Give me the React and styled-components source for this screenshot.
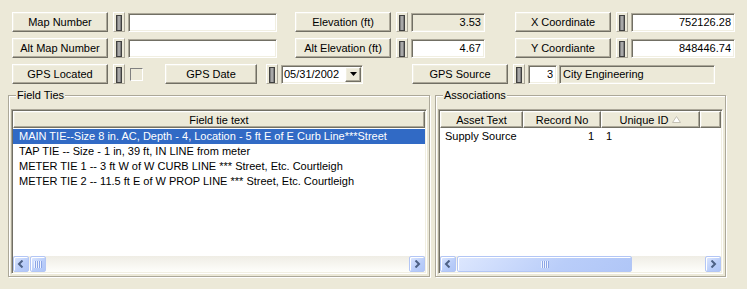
import React from 'react'
import styled, { createGlobalStyle } from 'styled-components'

const GlobalStyle = createGlobalStyle`
  * { box-sizing: border-box; }
  body {
    margin: 0;
    background: #ece9d8;
    font-family: "Liberation Sans", Arial, sans-serif;
    font-size: 11px;
    color: #000;
  }
`

const fieldTies = [
  'MAIN TIE--Size 8 in. AC, Depth - 4, Location - 5 ft E of E Curb Line***Street',
  'TAP TIE -- Size - 1 in, 39 ft, IN LINE from meter',
  'METER TIE 1 -- 3 ft W of W CURB LINE *** Street, Etc. Courtleigh',
  'METER TIE 2 -- 11.5 ft E of W PROP LINE *** Street, Etc. Courtleigh',
]

function LeftArrow() {
  return (
    <svg width="8" height="8" viewBox="0 0 8 8">
      <polyline points="5.5,0.5 2,4 5.5,7.5" fill="none" stroke="#4d6185" strokeWidth="2" />
    </svg>
  )
}

function RightArrow() {
  return (
    <svg width="8" height="8" viewBox="0 0 8 8">
      <polyline points="2.5,0.5 6,4 2.5,7.5" fill="none" stroke="#4d6185" strokeWidth="2" />
    </svg>
  )
}

function Grip() {
  return (
    <svg width="8" height="7" viewBox="0 0 8 7">
      {[0, 2, 4, 6].map((x) => (
        <rect key={x} x={x} y="0" width="1" height="7" fill="#eef3fe" />
      ))}
      {[1, 3, 5, 7].map((x) => (
        <rect key={x} x={x} y="0" width="1" height="7" fill="#8ca6e6" />
      ))}
    </svg>
  )
}

function SortUp() {
  return (
    <svg width="9" height="7" viewBox="0 0 9 7">
      <polygon points="4.5,0.5 8.5,6.5 0.5,6.5" fill="#fff" stroke="#c4c1b4" />
    </svg>
  )
}

function ScrollBar({ thumb }) {
  return (
    <HScroll>
      <ScrollBtn>
        <LeftArrow />
      </ScrollBtn>
      <Thumb $w={thumb}>
        <Grip />
      </Thumb>
      <Track />
      <ScrollBtn>
        <RightArrow />
      </ScrollBtn>
    </HScroll>
  )
}

export default function App() {
  return (
    <Page>
      <GlobalStyle />
      <Form>
        <Row>
          <Field>
            <LabelButton>Map Number</LabelButton>
            <Handle />
            <TextBox $w={149} readOnly defaultValue="" />
          </Field>
          <Field $gap={18}>
            <LabelButton>Elevation (ft)</LabelButton>
            <Handle />
            <TextBox $w={74} $align="right" $disabled readOnly defaultValue="3.53" />
          </Field>
          <Field $gap={30}>
            <LabelButton>X Coordinate</LabelButton>
            <Handle />
            <TextBox $w={104} $align="right" readOnly defaultValue="752126.28" />
          </Field>
        </Row>
        <Row>
          <Field>
            <LabelButton>Alt Map Number</LabelButton>
            <Handle />
            <TextBox $w={149} readOnly defaultValue="" />
          </Field>
          <Field $gap={18}>
            <LabelButton>Alt Elevation (ft)</LabelButton>
            <Handle />
            <TextBox $w={74} $align="right" readOnly defaultValue="4.67" />
          </Field>
          <Field $gap={30}>
            <LabelButton>Y Coordiante</LabelButton>
            <Handle />
            <TextBox $w={104} $align="right" readOnly defaultValue="848446.74" />
          </Field>
        </Row>
        <Row>
          <Field>
            <LabelButton>GPS Located</LabelButton>
            <Handle />
            <CheckBox />
          </Field>
          <Field $gap={22}>
            <LabelButton $w={92}>GPS Date</LabelButton>
            <Handle $left={9} />
            <Combo>
              <ComboText>05/31/2002</ComboText>
              <DropBtn>
                <svg width="7" height="4" viewBox="0 0 7 4">
                  <polygon points="0,0 7,0 3.5,4" fill="#000" />
                </svg>
              </DropBtn>
            </Combo>
          </Field>
          <Field $gap={49}>
            <LabelButton>GPS Source</LabelButton>
            <Handle />
            <TextBox $w={29} $align="right" readOnly defaultValue="3" />
            <TextBox $w={156} $gap={2} $disabled readOnly defaultValue="City Engineering" />
          </Field>
        </Row>
      </Form>

      <Groups>
        <Group $w={422}>
          <Legend>Field Ties</Legend>
          <ListView>
            <Header>
              <HeaderCell $flex>Field tie text</HeaderCell>
            </Header>
            <Body>
              {fieldTies.map((t, i) => (
                <ListRow key={t} $selected={i === 0}>
                  {t}
                </ListRow>
              ))}
            </Body>
            <ScrollBar thumb={16} />
          </ListView>
        </Group>

        <Group $w={291}>
          <Legend>Associations</Legend>
          <ListView>
            <Header>
              <HeaderCell $w={83}>Asset Text</HeaderCell>
              <HeaderCell $w={78}>Record No</HeaderCell>
              <HeaderCell $w={99}>
                Unique ID <SortUp />
              </HeaderCell>
              <HeaderCell $w={21} />
            </Header>
            <Body>
              <AssocRow>
                <Cell>Supply Source</Cell>
                <Cell $align="right">1</Cell>
                <Cell>1</Cell>
              </AssocRow>
            </Body>
            <ScrollBar thumb={175} />
          </ListView>
        </Group>
      </Groups>
    </Page>
  )
}

const Page = styled.div`
  width: 747px;
  height: 289px;
  overflow: hidden;
  padding-top: 12px;
`

const Form = styled.div`
  display: flex;
  flex-direction: column;
  gap: 6px;
  padding-left: 12px;
`

const Row = styled.div`
  display: flex;
  align-items: center;
  height: 20px;
`

const Field = styled.div`
  display: flex;
  align-items: center;
  margin-left: ${(p) => p.$gap || 0}px;
`

const raised = `
  border: 1px solid;
  border-color: #fff #716f64 #716f64 #fff;
  box-shadow: inset -1px -1px #aca899, inset 1px 1px #f1efe2;
  background: #ece9d8;
`

const sunken = `
  border: 1px solid;
  border-color: #aca899 #fff #fff #aca899;
  box-shadow: inset 1px 1px #716f64, inset -1px -1px #f1efe2;
`

const LabelButton = styled.button`
  ${raised}
  width: ${(p) => p.$w || 96}px;
  height: 20px;
  padding: 0;
  font: inherit;
  color: #000;
`

const Handle = styled.div`
  width: 12px;
  height: 20px;
  margin: 0 3px 0 ${(p) => p.$left || 5}px;
  padding: 2px;
  border: 1px solid;
  border-color: #fff #aca899 #aca899 #fff;
  background: #ece9d8;

  &::before {
    content: '';
    display: block;
    height: 100%;
    border: 1px solid #404040;
    background: linear-gradient(90deg, #808080 0 1px, #a8a8a8 1px 3px, #808080 3px);
  }
`

const TextBox = styled.input`
  ${sunken}
  width: ${(p) => p.$w}px;
  height: 19px;
  margin-left: ${(p) => p.$gap || 0}px;
  padding: 0 3px;
  font: inherit;
  color: #000;
  text-align: ${(p) => p.$align || 'left'};
  background: ${(p) => (p.$disabled ? '#ece9d8' : '#fff')};
  outline: none;
`

const CheckBox = styled.div`
  width: 13px;
  height: 13px;
  margin-left: 2px;
  border: 1px solid;
  border-color: #808080 #fff #fff #808080;
  background: #ece9d8;
`

const Combo = styled.div`
  ${sunken}
  display: flex;
  align-items: center;
  width: 82px;
  height: 19px;
  background: #fff;
  padding: 0 1px 0 2px;
`

const ComboText = styled.span`
  flex: 1;
`

const DropBtn = styled.div`
  ${raised}
  display: flex;
  align-items: center;
  justify-content: center;
  width: 16px;
  height: 15px;
`

const Groups = styled.div`
  display: flex;
  gap: 5px;
  margin-top: 5px;
  padding-left: 8px;
`

const Group = styled.fieldset`
  width: ${(p) => p.$w}px;
  margin: 0;
  padding: 0 2px 2px;
  border: 1px solid #aca899;
  box-shadow: inset 1px 1px #fff, 1px 1px #fff;
`

const Legend = styled.legend`
  margin-left: 5px;
  padding: 0 1px;
  line-height: 13px;
  background: #ece9d8;
`

const ListView = styled.div`
  ${sunken}
  display: flex;
  flex-direction: column;
  height: 165px;
  margin-top: 7px;
  padding: 1px;
  background: #fff;
`

const Header = styled.div`
  display: flex;
  height: 17px;
  flex: none;
`

const HeaderCell = styled.div`
  ${raised}
  ${(p) => (p.$flex ? 'flex: 1;' : `width: ${p.$w}px; flex: none;`)}
  display: flex;
  align-items: center;
  justify-content: center;
  gap: 4px;
  height: 17px;
  white-space: nowrap;
`

const Body = styled.div`
  flex: 1;
  padding-top: 1px;
  background: #fff;
  overflow: hidden;
`

const ListRow = styled.div`
  height: 15px;
  line-height: 15px;
  padding-left: 6px;
  white-space: nowrap;
  background: ${(p) => (p.$selected ? '#316ac5' : 'transparent')};
  color: ${(p) => (p.$selected ? '#fff' : '#000')};
`

const AssocRow = styled.div`
  display: grid;
  grid-template-columns: 83px 78px 99px;
  height: 15px;
  line-height: 15px;
`

const Cell = styled.div`
  padding: ${(p) => (p.$align === 'right' ? '0 7px 0 0' : '0 0 0 5px')};
  text-align: ${(p) => p.$align || 'left'};
  white-space: nowrap;
`

const HScroll = styled.div`
  display: flex;
  align-items: center;
  height: 16px;
  flex: none;
  background: linear-gradient(#efede5, #fefefb);
`

const xpBlue = `
  border: 1px solid #b3c6f5;
  border-radius: 2px;
  background: linear-gradient(135deg, #dde7fe, #b9cdf9 60%, #b0c6f7);
  box-shadow: inset 1px 1px #fff;
`

const ScrollBtn = styled.div`
  ${xpBlue}
  display: flex;
  align-items: center;
  justify-content: center;
  width: 16px;
  height: 16px;
  flex: none;
`

const Thumb = styled.div`
  ${xpBlue}
  display: flex;
  align-items: center;
  justify-content: center;
  width: ${(p) => p.$w}px;
  height: 16px;
  margin-left: 1px;
  flex: none;
`

const Track = styled.div`
  flex: 1;
`
